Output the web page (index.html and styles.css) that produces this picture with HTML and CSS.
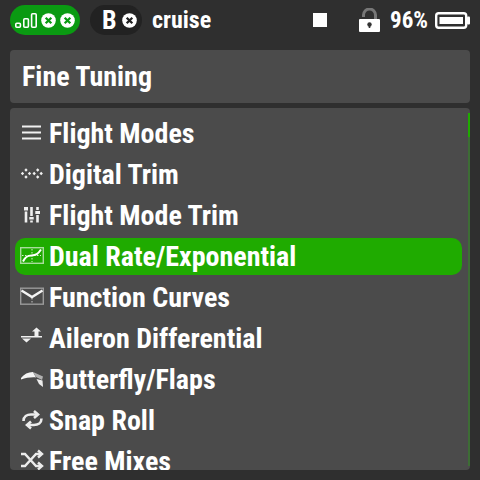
FILE: index.html
```html
<!DOCTYPE html>
<html lang="en">
  <head>
    <meta charset="UTF-8" />
    <title>Fine Tuning</title>
    <link rel="stylesheet" href="styles.css">
  </head>
  <body>
    <div class="topbar">
      <div class="pill pill-green">
        <svg class="bars" width="22" height="15" viewBox="0 0 22 15" fill="none" stroke="#fff" stroke-width="1.6">
          <rect x="0.8" y="10.3" width="4.6" height="3.9" rx="1" />
          <rect x="8.8" y="5.8" width="4.6" height="8.4" rx="1" />
          <rect x="16.6" y="0.8" width="4.6" height="13.4" rx="1" />
        </svg>
        <svg class="xmark" viewBox="0 0 16 16"><circle cx="8" cy="8" r="7.8" fill="#fff" /><path d="M5 5l6 6M11 5l-6 6" stroke="#0a9a12" stroke-width="2.4" /></svg>
        <svg class="xmark" viewBox="0 0 16 16"><circle cx="8" cy="8" r="7.8" fill="#fff" /><path d="M5 5l6 6M11 5l-6 6" stroke="#0a9a12" stroke-width="2.4" /></svg>
      </div>
      <div class="pill pill-dark">
        <span class="pill-letter">B</span>
        <svg class="xmark" viewBox="0 0 16 16"><circle cx="8" cy="8" r="7.8" fill="#fff" /><path d="M5 5l6 6M11 5l-6 6" stroke="#222" stroke-width="2.4" /></svg>
      </div>
      <span class="model">cruise</span>
      <div class="status">
        <span class="stop"></span>
        <svg class="lock" width="21" height="24" viewBox="0 0 21 24">
          <path d="M4.500 9V7a6 6 0 0 1 12 0V11" fill="none" stroke="#777" stroke-width="3" />
          <path d="M1 11h19a1 1 0 0 1 1 1v11a1 1 0 0 1-1 1H1a1 1 0 0 1-1-1V12a1 1 0 0 1 1-1z" fill="#fff" />
          <circle cx="10.500" cy="16.500" r="2.200" fill="#333" />
          <rect x="9.700" y="16.500" width="1.600" height="3.500" fill="#333" />
        </svg>
        <span class="percent">96%</span>
        <svg class="battery" width="35" height="17" viewBox="0 0 35 17">
          <rect x="1.200" y="1.200" width="30" height="14.600" rx="2.500" fill="none" stroke="#fff" stroke-width="2.400" />
          <rect x="4.500" y="5" width="23.500" height="7" fill="#fff" />
          <rect x="32" y="4.500" width="3" height="8" rx="1" fill="#fff" />
        </svg>
      </div>
    </div>

    <div class="header">Fine Tuning</div>

    <div class="list">
      <div class="row">
        <svg class="icon" viewBox="0 0 25 25" stroke="#f0f0f0" stroke-width="2" fill="none"><path d="M3 5.500h19M3 11.500h19M3 17.500h19" /></svg>
        <span>Flight Modes</span>
      </div>
      <div class="row">
        <svg class="icon" viewBox="0 0 25 25" fill="#f0f0f0"><path d="M7 6.300l1.700 1.700L7 9.700 5.300 8zM7 13.300L8.700 15 7 16.700 5.300 15zM3.500 9.800l1.700 1.700-1.700 1.700-1.700-1.700zM10.500 9.800l1.700 1.700-1.700 1.700-1.700-1.700zM18.700 6.300l1.700 1.700-1.700 1.700L17 8zM18.700 13.300l1.700 1.700-1.700 1.700L17 15zM15.200 9.800l1.700 1.700-1.700 1.700-1.700-1.700zM22.200 9.800l1.700 1.700-1.700 1.700-1.700-1.700z" /></svg>
        <span>Digital Trim</span>
      </div>
      <div class="row">
        <svg class="icon" viewBox="0 0 25 25" fill="#f0f0f0"><path d="M5 4h4v3.500H5zM5.700 8.500h2.600v11H5.700zM11.200 4h2.600v9h-2.600zM10.300 14h4.400v2.500h-4.400zM11.200 17.500h2.600v2h-2.600zM17.200 4h2.600v3h-2.600zM16.300 8h4.700v3h-4.700zM17.200 12h2.600v7.500h-2.600z" /></svg>
        <span>Flight Mode Trim</span>
      </div>
      <div class="row row-active">
        <svg class="icon" viewBox="0 0 25 25" fill="none">
          <rect x="1.700" y="3.700" width="22.600" height="15.600" stroke="#a8dc9c" stroke-width="1.400" />
          <path d="M3 11.500h19M13 5v13" stroke="#d8f0d0" stroke-width="1" stroke-dasharray="1.500 1.500" />
          <path d="M4 17.500C6 13 8 11.500 12.500 11.500S19 10 22 5.500" stroke="#fff" stroke-width="2" />
        </svg>
        <span>Dual Rate/Exponential</span>
      </div>
      <div class="row">
        <svg class="icon" viewBox="0 0 25 25" fill="none">
          <rect x="1.700" y="3.200" width="22.600" height="16" stroke="#9a9a9a" stroke-width="1.400" />
          <path d="M13 13v6" stroke="#c8c8c8" stroke-width="1" stroke-dasharray="1.500 1.500" />
          <path d="M2.500 5.500L13 12 23.500 5.500" stroke="#f4f4f4" stroke-width="2.400" />
        </svg>
        <span>Function Curves</span>
      </div>
      <div class="row">
        <svg class="icon" viewBox="0 0 25 25" fill="#f0f0f0"><path d="M2 10h21v1.500H2zM17.500 1.500L22 5.500h-2.500V10H15.500V5.500H13zM3 12.500h9L7.500 16.500z" /></svg>
        <span>Aileron Differential</span>
      </div>
      <div class="row">
        <svg class="icon" viewBox="0 0 25 25"><path d="M2 11C5 7 9 5 14 5l3 5.500c-5-.5-10 .5-15 2z" fill="#f4f4f4" /><path d="M14 5l10 4.500-1 3.500-6-3z" fill="#b0b0b0" /><path d="M17.500 12l6 1.500.5 6.500-4-3z" fill="#ececec" /></svg>
        <span>Butterfly/Flaps</span>
      </div>
      <div class="row">
        <svg class="icon" viewBox="0 0 25 25" fill="none" stroke="#ececec" stroke-width="2.600"><path d="M4.500 13C4.500 8.500 8 6.500 12 6.500h6" /><path d="M15 3l4 3.500-4 3.500" /><path d="M22.500 10.500c0 4.500-3.500 6.500-7.500 6.500H9" /><path d="M12 13.500L8 17l4 3.500" /></svg>
        <span>Snap Roll</span>
      </div>
      <div class="row">
        <svg class="icon" viewBox="0 0 25 25" fill="none" stroke="#ececec" stroke-width="2.400"><path d="M2 5h4l11 12h5M2 17h4L17 5h5" /><path d="M19 1.500L23 5l-4 3.500M19 13.500L23 17l-4 3.500" /></svg>
        <span>Free Mixes</span>
      </div>
      <div class="scroll-track"><div class="scroll-thumb"></div></div>
    </div>
  </body>
</html>
```

FILE: styles.css
```css
* {
  box-sizing: border-box;
}

body {
  width: 480px;
  height: 480px;
  margin: 0;
  padding: 0 10px;
  overflow: hidden;
  background: #2f2f2f;
  color: #fff;
  font-family: Roboto, "Liberation Sans", sans-serif;
  font-stretch: 75%;
  font-weight: 700;
}

.topbar {
  display: flex;
  align-items: center;
  height: 50px;
  padding-bottom: 10px;
  font-size: 24px;
}

.pill {
  display: flex;
  align-items: center;
  height: 30px;
  border-radius: 15px;
}

.pill-green {
  width: 70px;
  gap: 4px;
  padding-left: 5px;
  background: #0a9a12;
}

.pill-dark {
  width: 52px;
  margin-left: 10px;
  padding-left: 12px;
  gap: 5px;
  background: #222;
}

.pill-letter {
  font-size: 26px;
}

.xmark {
  width: 15px;
  height: 15px;
}

.model {
  margin-left: 10px;
}

.status {
  display: flex;
  align-items: center;
  margin-left: auto;
  font-size: 23px;
}

.stop {
  width: 14px;
  height: 14px;
  margin-right: 32px;
  background: #fff;
}

.lock {
  margin-right: 10px;
}

.percent {
  margin-right: 7px;
}

.header {
  height: 53px;
  padding-left: 12px;
  border-radius: 4px;
  background: #4b4b4b;
  font-size: 28px;
  line-height: 54px;
}

.list {
  position: relative;
  display: flex;
  flex-direction: column;
  gap: 4px;
  height: 362px;
  margin-top: 5px;
  padding: 7px 8px 0 5px;
  overflow: hidden;
  border-radius: 4px;
  background: #4b4b4b;
  font-size: 28px;
}

.row {
  display: flex;
  flex: none;
  align-items: center;
  gap: 5px;
  height: 37px;
  padding-left: 4px;
  border-radius: 10px;
}

.row-active {
  background: #1fab00;
}

.icon {
  flex: none;
  width: 25px;
  height: 25px;
}

.scroll-track {
  position: absolute;
  top: 5px;
  right: 0;
  bottom: 4px;
  width: 2px;
  background: #3d6d35;
}

.scroll-thumb {
  height: 24px;
  background: #1fab00;
}
```
